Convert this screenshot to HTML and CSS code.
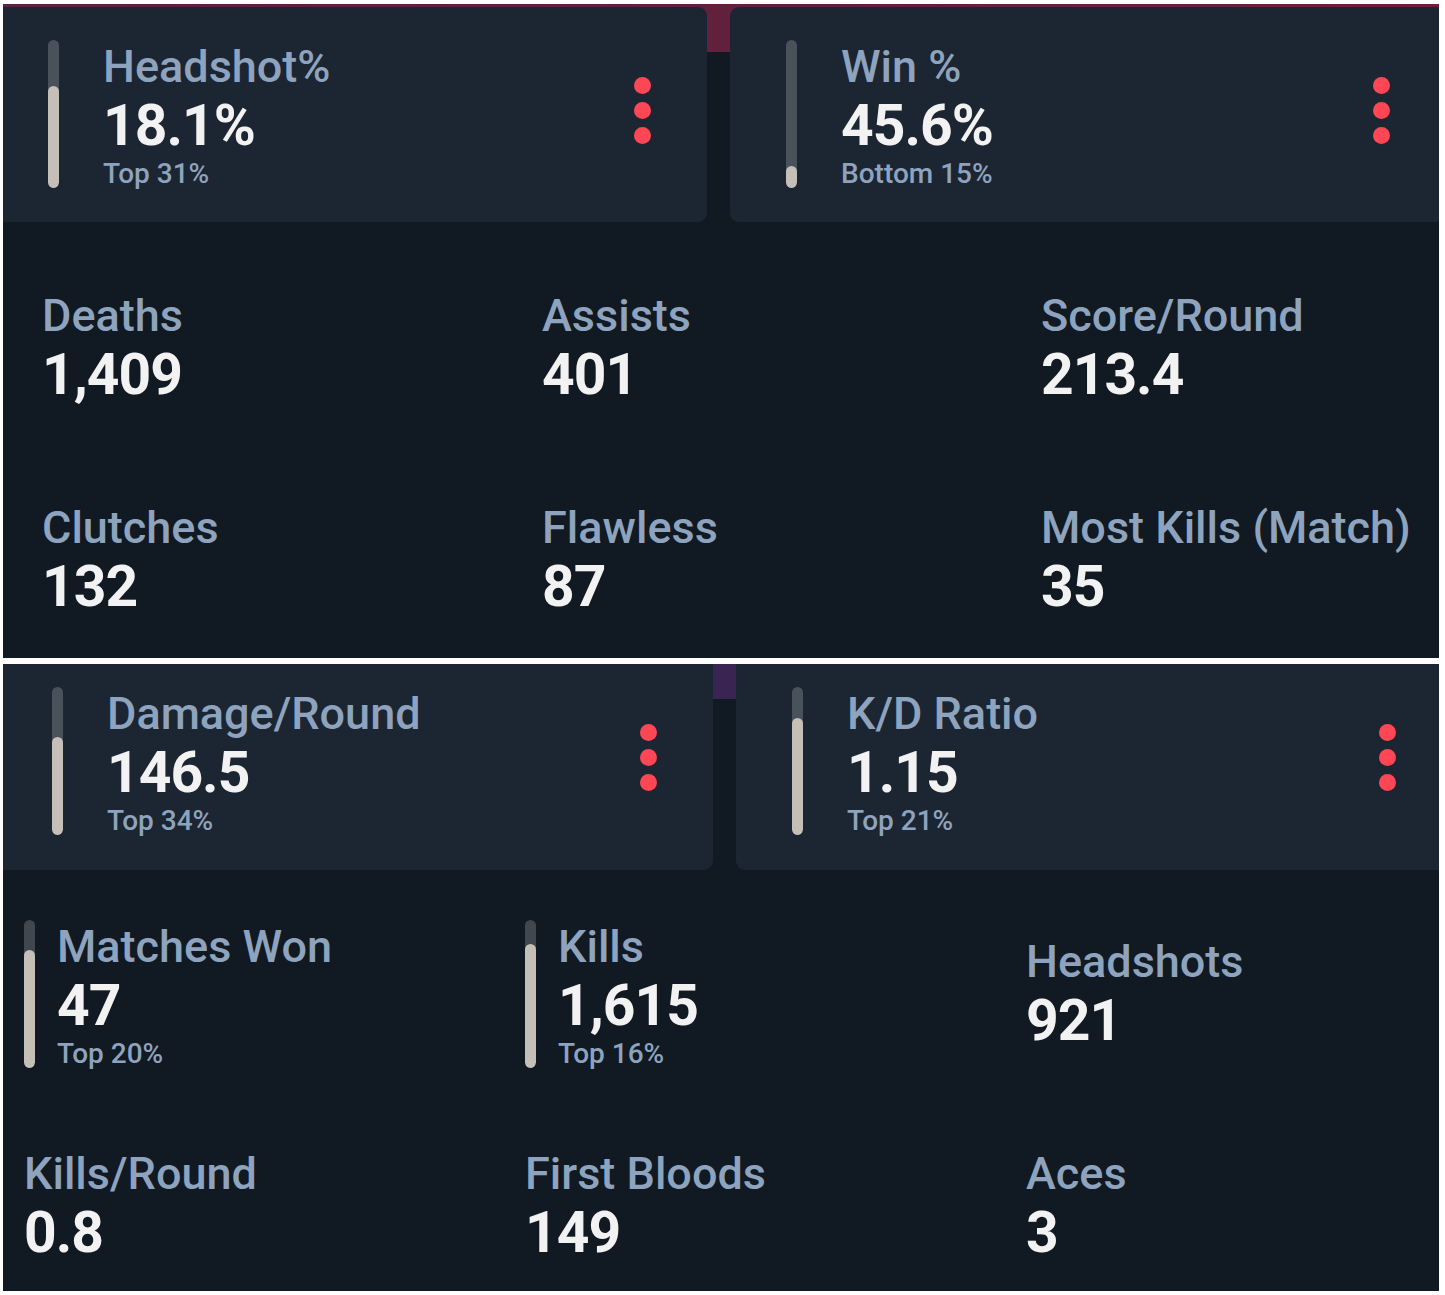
FILE: index.html
```html
<!DOCTYPE html>
<html lang="en">
<head>
<meta charset="utf-8">
<title>Stats</title>
<link rel="stylesheet" href="styles.css">
</head>
<body>
<div class="page">
  <section class="panel panel-top">
    <div class="cards">
      <div class="card card-first card-hs">
        <div class="bar"><div class="bar-fill" style="height:69%"></div></div>
        <div class="stat">
          <div class="label">Headshot%</div>
          <div class="value">18.1%</div>
          <div class="sub">Top 31%</div>
        </div>
        <div class="dots"><span></span><span></span><span></span></div>
      </div>
      <div class="card card-second card-win">
        <div class="bar"><div class="bar-fill" style="height:15%"></div></div>
        <div class="stat">
          <div class="label">Win %</div>
          <div class="value">45.6%</div>
          <div class="sub">Bottom 15%</div>
        </div>
        <div class="dots"><span></span><span></span><span></span></div>
      </div>
    </div>
    <div class="grid grid-top">
      <div class="item"><div class="stat-plain"><div class="label">Deaths</div><div class="value">1,409</div></div></div>
      <div class="item"><div class="stat-plain"><div class="label">Assists</div><div class="value">401</div></div></div>
      <div class="item"><div class="stat-plain"><div class="label">Score/Round</div><div class="value">213.4</div></div></div>
      <div class="item"><div class="stat-plain"><div class="label">Clutches</div><div class="value">132</div></div></div>
      <div class="item"><div class="stat-plain"><div class="label">Flawless</div><div class="value">87</div></div></div>
      <div class="item"><div class="stat-plain"><div class="label">Most Kills (Match)</div><div class="value">35</div></div></div>
    </div>
  </section>

  <section class="panel panel-bottom">
    <div class="cards">
      <div class="card card-first card-dmg">
        <div class="bar"><div class="bar-fill" style="height:66%"></div></div>
        <div class="stat">
          <div class="label">Damage/Round</div>
          <div class="value">146.5</div>
          <div class="sub">Top 34%</div>
        </div>
        <div class="dots"><span></span><span></span><span></span></div>
      </div>
      <div class="card card-second card-kd">
        <div class="bar"><div class="bar-fill" style="height:79%"></div></div>
        <div class="stat">
          <div class="label">K/D Ratio</div>
          <div class="value">1.15</div>
          <div class="sub">Top 21%</div>
        </div>
        <div class="dots"><span></span><span></span><span></span></div>
      </div>
    </div>
    <div class="grid grid-bottom">
      <div class="item">
        <div class="bar"><div class="bar-fill" style="height:80%"></div></div>
        <div class="stat-small"><div class="label">Matches Won</div><div class="value">47</div><div class="sub">Top 20%</div></div>
      </div>
      <div class="item">
        <div class="bar"><div class="bar-fill" style="height:84%"></div></div>
        <div class="stat-small"><div class="label">Kills</div><div class="value">1,615</div><div class="sub">Top 16%</div></div>
      </div>
      <div class="item"><div class="stat-plain"><div class="label">Headshots</div><div class="value">921</div></div></div>
      <div class="item"><div class="stat-plain"><div class="label">Kills/Round</div><div class="value">0.8</div></div></div>
      <div class="item"><div class="stat-plain"><div class="label">First Bloods</div><div class="value">149</div></div></div>
      <div class="item"><div class="stat-plain"><div class="label">Aces</div><div class="value">3</div></div></div>
    </div>
  </section>
</div>
</body>
</html>
```

FILE: styles.css
```css
html, body {
  margin: 0;
  padding: 0;
  background: #ffffff;
}

body {
  font-family: Roboto, "Liberation Sans", Arial, sans-serif;
}

.page {
  width: 1436px;
  padding: 4px 6px 4px 3px;
}

.panel {
  overflow: hidden;
  background-color: #111922;
}

.panel-top {
  background: linear-gradient(to bottom, transparent 0, transparent 48px, #111922 48px),
              linear-gradient(to right, #5a2142, #6a2038);
  background-color: #111922;
}

.panel-bottom {
  margin-top: 6px;
  background: linear-gradient(to bottom, #3a2452 0, #3a2452 35px, #111922 35px);
}

.cards {
  display: flex;
  gap: 23px;
}

.panel-top .cards {
  padding-top: 3px;
}

.card {
  display: flex;
  align-items: stretch;
  background: #1c2632;
}

.card-first {
  flex: 0 0 auto;
}

.card-second {
  flex: 1 1 auto;
}

.panel-top .card {
  padding-top: 33px;
  padding-bottom: 34px;
}

.panel-bottom .card {
  padding-top: 23px;
  padding-bottom: 35px;
}

.card-hs {
  width: 704px;
  padding-left: 45px;
  border-radius: 0 9px 9px 0;
  box-sizing: border-box;
}

.card-win {
  padding-left: 56px;
  border-radius: 9px 0 3px 9px;
}

.card-dmg {
  width: 710px;
  padding-left: 49px;
  border-radius: 0 0 9px 0;
  box-sizing: border-box;
}

.card-kd {
  padding-left: 56px;
  border-radius: 0 0 0 9px;
}

.bar {
  width: 11px;
  flex: 0 0 11px;
  border-radius: 6px;
  background: rgba(255, 255, 255, 0.2);
  display: flex;
  flex-direction: column;
  justify-content: flex-end;
  overflow: hidden;
}

.bar-fill {
  width: 100%;
  background: #c4c0b8;
  border-radius: 6px;
}

.stat {
  flex: 1 1 auto;
  margin-left: 44px;
}

.stat-small {
  margin-left: 22px;
}

.label {
  font-size: 45px;
  font-weight: 500;
  line-height: 53px;
  color: #8ea3bd;
  white-space: nowrap;
}

.value {
  font-size: 57px;
  font-weight: 700;
  line-height: 66px;
  letter-spacing: -1px;
  color: #f2f2f2;
  white-space: nowrap;
}

.sub {
  font-size: 28px;
  font-weight: 500;
  line-height: 29px;
  color: #8ea3bd;
  white-space: nowrap;
}

.dots {
  display: flex;
  flex-direction: column;
  gap: 8px;
  align-self: flex-start;
  margin-top: 37px;
}

.dots span {
  display: block;
  width: 17px;
  height: 17px;
  border-radius: 50%;
  background: #ff4655;
}

.card-hs .dots { margin-right: 56px; }
.card-win .dots { margin-right: 49px; }
.card-dmg .dots { margin-right: 56px; }
.card-kd .dots { margin-right: 43px; }

.grid {
  display: grid;
}

.grid-top {
  padding: 67px 0 38px 39px;
  grid-template-columns: 500px 499px 1fr;
  row-gap: 93px;
}

.grid-bottom {
  padding: 50px 0 25px 21px;
  grid-template-columns: 501px 501px 1fr;
  row-gap: 79px;
  align-items: center;
}

.item {
  display: flex;
  align-items: stretch;
}
```
